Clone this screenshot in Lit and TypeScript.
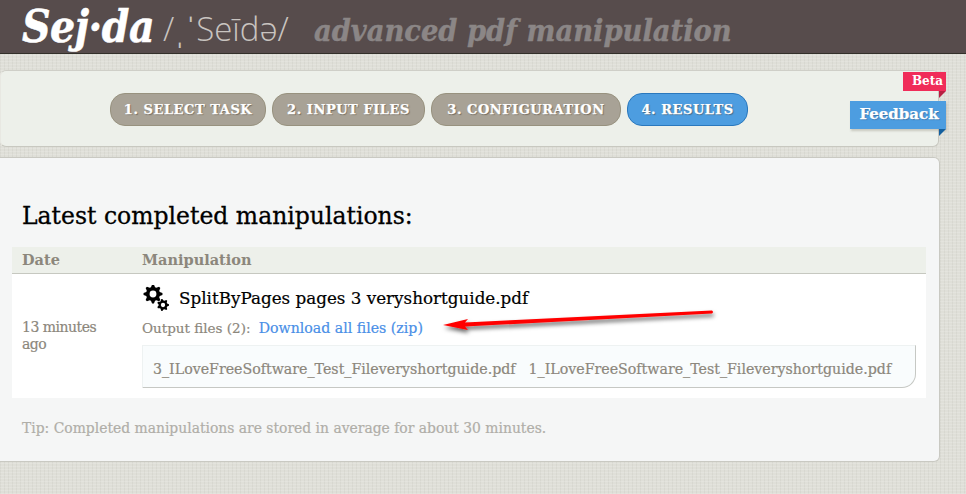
import { LitElement, html, css, svg } from "lit";
import { customElement } from "lit/decorators.js";

const gear = (cx: number, cy: number, r: number, teeth: number) => {
  const pts: string[] = [];
  const n = teeth * 4;
  for (let i = 0; i < n; i++) {
    const a = ((i - 0.5) / n) * Math.PI * 2;
    const rr = i % 4 < 2 ? r : r * 0.74;
    pts.push(`${(cx + rr * Math.cos(a)).toFixed(2)},${(cy + rr * Math.sin(a)).toFixed(2)}`);
  }
  return svg`<polygon points=${pts.join(" ")} fill="#000"/><circle cx=${cx} cy=${cy} r=${r * 0.36} fill="#fff"/>`;
};

@customElement("app-root")
export class AppRoot extends LitElement {
  static styles = css`
    :host {
      display: block;
      position: relative;
      width: 966px;
      height: 494px;
      overflow: hidden;
      background-color: #dfdfd8;
      background-image:
        repeating-linear-gradient(0deg, rgba(255,255,255,.14) 0 1px, transparent 1px 3px),
        repeating-linear-gradient(90deg, rgba(120,120,105,.07) 0 1px, transparent 1px 4px);
      font-family: "DejaVu Serif", serif;
    }
    .top {
      height: 53px;
      background: #574c4c;
      border-bottom: 1px solid #33302a;
      display: flex;
      align-items: flex-end;
      padding-left: 22px;
      overflow: hidden;
    }
    .logo {
      font-size: 44px;
      font-stretch: condensed;
      font-style: italic;
      font-weight: 700;
      line-height: 53px;
      color: #fff;
      width: 141px;
      white-space: nowrap;
      letter-spacing: -.5px;
      -webkit-text-stroke: .5px #fff;
    }
    .phon {
      font: 300 33px/53px "Open Sans", sans-serif;
      color: #c9c4c0;
      width: 151px;
      white-space: nowrap;
      position: relative;
      top: 2px;
    }
    .tag {
      font-size: 30.4px;
      font-stretch: condensed;
      font-style: italic;
      font-weight: 700;
      line-height: 53px;
      color: #8b8686;
      white-space: nowrap;
      position: relative;
      top: 4px;
      -webkit-text-stroke: .4px #8b8686;
    }
    .steps {
      box-sizing: border-box;
      margin: 16px 0 0 0;
      width: 939px;
      height: 77px;
      background: #edf0ea;
      border: 1px solid #c8c8c0;
      border-left-color: #e8e8e2;
      border-top-color: #cfcfc8;
      border-radius: 6px;
      display: flex;
      gap: 6px;
      padding: 22px 0 0 109px;
    }
    .step {
      box-sizing: border-box;
      height: 33px;
      border-radius: 15px;
      background: #a8a296;
      border: 1px solid #98927f;
      color: #fff;
      font-size: 13px;
      font-weight: 700;
      line-height: 32px;
      letter-spacing: .55px;
      text-align: center;
      white-space: nowrap;
      text-shadow: 1px 1px 1px rgba(70,60,50,.55);
      -webkit-text-stroke: .25px #fff;
    }
    .step.on {
      background: #4d9de0;
      border-color: #2a78bd;
    }
    .main {
      box-sizing: border-box;
      margin: 10px 0 0 0;
      width: 940px;
      height: 305px;
      background: #f5f6f6;
      border: 1px solid #c9c9c2;
      border-left: 0;
      border-radius: 0 6px 6px 0;
      padding: 42px 13px 0 12px;
    }
    h1 {
      margin: 0 0 0 10px;
      font-size: 23.5px;
      font-weight: 400;
      line-height: 32px;
      color: #000;
      height: 47px;
      -webkit-text-stroke: .3px #000;
    }
    .thead {
      display: flex;
      height: 27px;
      box-sizing: border-box;
      background: #edf0ea;
      border-bottom: 1px solid #c6c8c0;
      font-size: 14.5px;
      font-weight: 700;
      line-height: 25px;
      color: #8c877c;
    }
    .cdate { width: 130px; padding-left: 10px; box-sizing: border-box; }
    .row {
      display: flex;
      height: 124px;
      background: #fff;
    }
    .when {
      width: 130px;
      box-sizing: border-box;
      padding: 45px 24px 0 10px;
      font-size: 14px;
      line-height: 17px;
      letter-spacing: -.5px;
      color: #8c877c;
      -webkit-text-stroke: .2px currentColor;
    }
    .job { flex: 1; min-width: 0; padding-top: 9px; }
    .job-title {
      display: flex;
      align-items: center;
      height: 30px;
      gap: 9px;
      font-size: 16.75px;
      line-height: 30px;
      color: #000;
      -webkit-text-stroke: .2px #000;
    }
    .job-title svg { width: 28px; height: 26px; flex: none; }
    .outputs {
      margin-top: 4px;
      height: 22px;
      font-size: 13.5px;
      line-height: 22px;
      color: #8c877c;
      white-space: nowrap;
      -webkit-text-stroke: .2px currentColor;
    }
    .outputs a { color: #4a8fe7; font-size: 14.15px; margin-left: 4px; text-decoration: none; }
    .files {
      box-sizing: border-box;
      margin-top: 6px;
      width: 774px;
      height: 43px;
      padding: 0 0 0 10px;
      background: #f9fcfd;
      border: 1px solid #eef2f2;
      border-bottom-color: #c6c8c4;
      border-right-color: #c6c8c4;
      border-radius: 0 0 14px 0;
      font-size: 14.2px;
      line-height: 47px;
      color: #8c877c;
      white-space: nowrap;
      display: flex;
      gap: 13px;
      -webkit-text-stroke: .2px currentColor;
    }
    .tip {
      margin: 20px 0 0 10px;
      font-size: 13.9px;
      line-height: 20px;
      color: #b0aea8;
      white-space: nowrap;
      -webkit-text-stroke: .2px currentColor;
    }
    .feedback {
      position: absolute;
      left: 850px;
      top: 101px;
      width: 96px;
      height: 28px;
      box-sizing: border-box;
      padding-left: 2px;
      background: #4d9de0;
      color: #fff;
      font-size: 15px;
      font-weight: 700;
      line-height: 26px;
      text-align: center;
      box-shadow: 1px 2px 2px rgba(120,110,90,.3);
      text-shadow: 1px 1px 1px rgba(40,60,90,.4);
      -webkit-text-stroke: .25px #fff;
    }
    .beta {
      position: absolute;
      left: 903px;
      top: 72px;
      width: 43px;
      height: 19px;
      box-sizing: border-box;
      padding-right: 3px;
      background: #f02c59;
      color: #fff;
      font-size: 12px;
      font-weight: 700;
      line-height: 18px;
      text-align: right;
    }
    .fold { position: absolute; width: 7px; height: 7px; }
    .fold.b { left: 939px; top: 91px; }
    .fold.f { left: 939px; top: 129px; }
    .arrow { position: absolute; left: 438px; top: 302px; width: 290px; height: 36px; pointer-events: none; }
  `;

  render() {
    const steps = [
      ["1. SELECT TASK", 156, false],
      ["2. INPUT FILES", 153, false],
      ["3. CONFIGURATION", 190, false],
      ["4. RESULTS", 121, true],
    ] as const;
    return html`
      <div class="top">
        <div class="logo">Sej·da</div>
        <div class="phon">/ˌˈSeīdə/</div>
        <div class="tag">advanced pdf manipulation</div>
      </div>
      <div class="steps">
        ${steps.map(
          ([t, w, on]) =>
            html`<div class="step ${on ? "on" : ""}" style="width:${w}px">${t}</div>`
        )}
      </div>
      <div class="main">
        <h1>Latest completed manipulations:</h1>
        <div class="thead"><div class="cdate">Date</div><div>Manipulation</div></div>
        <div class="row">
          <div class="when">13 minutes ago</div>
          <div class="job">
            <div class="job-title">
              <svg viewBox="0 0 28 26">
                ${gear(11, 9, 9.5, 8)} ${gear(21, 20, 6, 7)}
              </svg>
              <span>SplitByPages pages 3 veryshortguide.pdf</span>
            </div>
            <div class="outputs">Output files (2): <a>Download all files (zip)</a></div>
            <div class="files">
              <span>3_ILoveFreeSoftware_Test_Fileveryshortguide.pdf</span>
              <span>1_ILoveFreeSoftware_Test_Fileveryshortguide.pdf</span>
            </div>
          </div>
        </div>
        <div class="tip">Tip: Completed manipulations are stored in average for about 30 minutes.</div>
      </div>
      <div class="beta">Beta</div>
      <svg class="fold b" viewBox="0 0 7 7"><polygon points="0,0 7,0 0,7" fill="#b81f42"/></svg>
      <div class="feedback">Feedback</div>
      <svg class="fold f" viewBox="0 0 7 7"><polygon points="0,0 7,0 0,7" fill="#14609f"/></svg>
      <svg class="arrow" viewBox="0 0 290 36">
        <defs>
          <filter id="s" x="-10%" y="-60%" width="120%" height="260%">
            <feDropShadow dx="1" dy="3" stdDeviation="2" flood-color="#000" flood-opacity=".6"/>
          </filter>
        </defs>
        <path filter="url(#s)" fill="#f00" d="M5 23 L30 17 L27 20.500 L274 8.500 Q276 10 274 11.500 L27 24.500 L30 28 Z"/>
      </svg>
    `;
  }
}
